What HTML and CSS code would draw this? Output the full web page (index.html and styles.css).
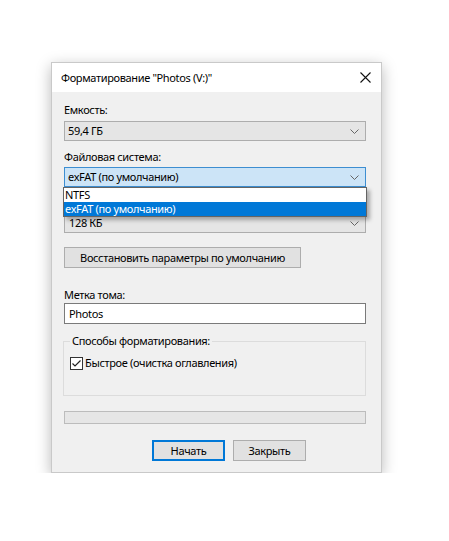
FILE: index.html
```html
<!DOCTYPE html>
<html lang="ru">
<head>
<meta charset="utf-8">
<title>Форматирование</title>
<link rel="stylesheet" href="styles.css">
</head>
<body>
<div class="dialog">
  <div class="titlebar">
    <span class="title">Форматирование "Photos (V:)"</span>
    <svg class="close" width="11" height="11" viewBox="0 0 11 11"><path d="M0.5 0.5 L10.5 10.5 M10.5 0.5 L0.5 10.5" stroke="#111" stroke-width="1.1" fill="none"/></svg>
  </div>
  <div class="content">
    <div class="label first">Емкость:</div>
    <div class="combo">
      <span>59,4 ГБ</span>
      <svg class="chev" width="9" height="5" viewBox="0 0 9 5"><path d="M0.5 0.5 L4.5 4.5 L8.5 0.5" stroke="#666" fill="none"/></svg>
    </div>
    <div class="label">Файловая система:</div>
    <div class="combo-wrap">
      <div class="combo focused">
        <span>exFAT (по умолчанию)</span>
        <svg class="chev" width="9" height="5" viewBox="0 0 9 5"><path d="M0.5 0.5 L4.5 4.5 L8.5 0.5" stroke="#666" fill="none"/></svg>
      </div>
      <ul class="list">
        <li>NTFS</li>
        <li class="sel">exFAT (по умолчанию)</li>
      </ul>
    </div>
    <div class="label covered">Размер единицы распределения:</div>
    <div class="combo">
      <span class="cluster">128 КБ</span>
      <svg class="chev" width="9" height="5" viewBox="0 0 9 5"><path d="M0.5 0.5 L4.5 4.5 L8.5 0.5" stroke="#666" fill="none"/></svg>
    </div>
    <div class="restore">Восстановить параметры по умолчанию</div>
    <div class="label vol">Метка тома:</div>
    <div class="input">Photos</div>
    <fieldset class="group">
      <legend>Способы форматирования:</legend>
      <div class="check-row">
        <svg class="check" width="13" height="13" viewBox="0 0 13 13"><rect x="0.5" y="0.5" width="12" height="12" fill="#fff" stroke="#333"/><path d="M2.5 6.5 L5 9 L10.5 3.5" stroke="#222" stroke-width="1.2" fill="none"/></svg>
        <span>Быстрое (очистка оглавления)</span>
      </div>
    </fieldset>
    <div class="progress"></div>
    <div class="buttons">
      <div class="btn default">Начать</div>
      <div class="btn">Закрыть</div>
    </div>
  </div>
</div>
</body>
</html>
```
FILE: styles.css
```css
html, body {
  margin: 0;
  padding: 0;
  background: #fff;
}
body {
  font-family: "Noto Sans", "Open Sans", sans-serif;
  font-size: 11px;
  letter-spacing: -0.35px;
  color: #000;
  padding: 62px 0 0 51px;
}
.dialog {
  width: 331px;
  height: 411px;
  box-sizing: border-box;
  border: 1px solid #c9c9c9;
  background: #f0f0f0;
  box-shadow: 0 4px 14px rgba(0,0,0,0.28);
  display: flex;
  flex-direction: column;
}
.titlebar {
  height: 29px;
  background: #fff;
  display: flex;
  align-items: center;
  justify-content: space-between;
  padding: 0 10px 0 9px;
  flex-shrink: 0;
}
.title {
  line-height: 16px;
  white-space: nowrap;
}
.close {
  display: block;
}
.content {
  padding: 10px 15px 0 12px;
}
.label {
  line-height: 16px;
  margin-top: 8px;
  margin-bottom: 2px;
  white-space: nowrap;
}
.label.first {
  margin-top: 0;
  margin-bottom: 3px;
}
.label.covered {
  visibility: hidden;
}
.combo {
  height: 20px;
  box-sizing: border-box;
  border: 1px solid #adadad;
  background: #e5e5e5;
  display: flex;
  align-items: center;
  justify-content: space-between;
  padding: 0 6px 0 3px;
  line-height: 16px;
  white-space: nowrap;
}
.combo.focused {
  background: #cce4f7;
  border-color: #3d8ed1;
}
.cluster {
  padding-left: 1px;
}
.chev {
  display: block;
}
.combo-wrap {
  position: relative;
}
.list {
  position: absolute;
  top: 100%;
  left: -1px;
  width: 304px;
  margin: 0;
  padding: 0;
  list-style: none;
  box-sizing: border-box;
  border: 1px solid #646464;
  background: #fff;
  box-shadow: 3px 3px 4px rgba(0,0,0,0.3);
  z-index: 2;
}
.list li {
  line-height: 14px;
  padding-left: 1px;
  white-space: nowrap;
}
.list li.sel {
  background: #0078d7;
  color: #fff;
}
.restore {
  margin-top: 14px;
  width: 237px;
  height: 21px;
  box-sizing: border-box;
  border: 1px solid #adadad;
  background: #e1e1e1;
  display: flex;
  align-items: center;
  justify-content: center;
  line-height: 16px;
  white-space: nowrap;
}
.label.vol {
  margin-top: 19px;
  margin-bottom: 0;
}
.input {
  height: 21px;
  box-sizing: border-box;
  border: 1px solid #7a7a7a;
  background: #fff;
  padding: 0 4px;
  display: flex;
  align-items: center;
  line-height: 16px;
}
.group {
  margin: 9px 0 0 -1px;
  padding: 0 0 24px 6px;
  border: 1px solid #dcdcdc;
  min-width: 0;
}
.group legend {
  padding: 0 2px;
  line-height: 16px;
}
.check-row {
  display: flex;
  align-items: center;
  gap: 2px;
  margin-top: 6px;
  line-height: 16px;
  white-space: nowrap;
}
.check {
  display: block;
}
.progress {
  margin-top: 15px;
  height: 13px;
  box-sizing: border-box;
  border: 1px solid #bcbcbc;
  background: #e6e6e6;
}
.buttons {
  display: flex;
  gap: 8px;
  margin-top: 16px;
  padding-left: 88px;
}
.btn {
  width: 73px;
  height: 21px;
  box-sizing: border-box;
  border: 1px solid #adadad;
  background: #e1e1e1;
  display: flex;
  align-items: center;
  justify-content: center;
  line-height: 16px;
}
.btn.default {
  border: 2px solid #0078d7;
}
```
